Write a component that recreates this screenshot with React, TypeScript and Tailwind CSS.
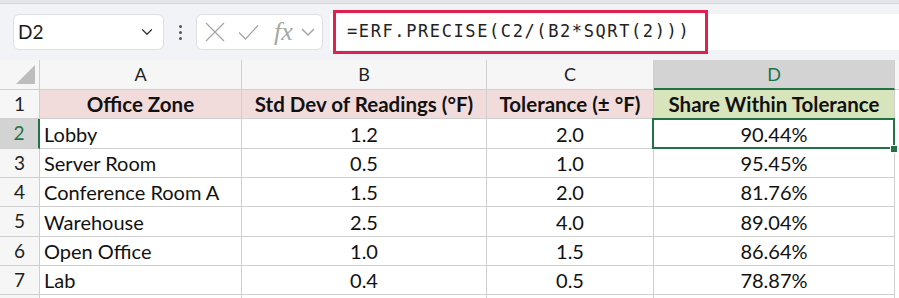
import { ChevronDown } from 'lucide-react';

const COLS = [
  { key: 'A', width: 'w-[202px]' },
  { key: 'B', width: 'w-[245px]' },
  { key: 'C', width: 'w-[167px]' },
  { key: 'D', width: 'w-[241px]' },
];

const HEADERS = ['Office Zone', 'Std Dev of Readings (°F)', 'Tolerance (± °F)', 'Share Within Tolerance'];

const ROWS = [
  ['Lobby', '1.2', '2.0', '90.44%'],
  ['Server Room', '0.5', '1.0', '95.45%'],
  ['Conference Room A', '1.5', '2.0', '81.76%'],
  ['Warehouse', '2.5', '4.0', '89.04%'],
  ['Open Office', '1.0', '1.5', '86.64%'],
  ['Lab', '0.4', '0.5', '78.87%'],
];

// heights of rows 1..7, so the grid lines land where the screenshot has them
const HEIGHTS = ['h-[29px]', 'h-[30px]', 'h-[29px]', 'h-[29px]', 'h-[30px]', 'h-[29px]', 'h-[29px]'];

function FormulaBar() {
  return (
    <div className="flex h-[56px] items-center bg-[#f1f3f6] pl-[13px]">
      {/* Name box */}
      <div className="flex h-[36px] w-[151px] items-center justify-between rounded-[6px] border border-[#dcdfe3] bg-white pr-[7px] pl-[4px]">
        <span className="text-[19px] text-[#1b1b1b]">D2</span>
        <ChevronDown size={18} strokeWidth={1.6} className="text-[#333]" />
      </div>

      {/* Splitter dots */}
      <div className="flex w-[32px] flex-col items-center gap-[3px]">
        <span className="h-[3px] w-[3px] rounded-full bg-[#555]" />
        <span className="h-[3px] w-[3px] rounded-full bg-[#555]" />
        <span className="h-[3px] w-[3px] rounded-full bg-[#555]" />
      </div>

      {/* Cancel / enter / fx */}
      <div className="flex h-[36px] w-[127px] items-center rounded-[6px] border border-[#dcdfe3] bg-white pl-[8px] text-[#a6a6a6]">
        <svg width="20" height="20" viewBox="0 0 20 20" fill="none" stroke="currentColor" strokeWidth="1.3">
          <path d="M1 1 19 19M19 1 1 19" />
        </svg>
        <svg width="21" height="17" viewBox="0 0 21 17" fill="none" stroke="currentColor" strokeWidth="1.3" className="ml-[13px]">
          <path d="M1 8.5 7.5 15 20 1.5" />
        </svg>
        <span className="ml-[15px] font-['Liberation_Serif',serif] text-[26px] italic leading-none">fx</span>
        <svg width="14" height="8" viewBox="0 0 14 8" fill="none" stroke="currentColor" strokeWidth="1.5" className="ml-[8px]">
          <path d="M1 1 7 7 13 1" />
        </svg>
      </div>

      {/* Formula input */}
      <div className="ml-[7px] flex h-[36px] flex-1 items-center bg-white">
        <div className="ml-[3px] flex h-[44px] w-[375px] items-center border-[3px] border-[#e1204f] pl-[11px]">
          <span className="font-['DejaVu_Sans_Mono',monospace] text-[17px] tracking-[1.6px] text-[#222]">
            =ERF.PRECISE(C2/(B2*SQRT(2)))
          </span>
        </div>
      </div>
    </div>
  );
}

function ColumnHeaders() {
  return (
    <div className="flex h-[30px] bg-[#f6f6f6]">
      <div className="flex w-[40px] shrink-0 items-end border-r border-b border-[#cfcfcf] pb-[5px] pl-[16px]">
        <svg width="19" height="19" viewBox="0 0 19 19">
          <polygon points="19,0 19,19 0,19" fill="#bdbdbd" />
        </svg>
      </div>
      {COLS.map((c) =>
        c.key === 'D' ? (
          <div
            key={c.key}
            className={`${c.width} flex shrink-0 items-center justify-center border-r border-b-2 border-r-[#cfcfcf] border-b-[#217346] bg-[#d3d3d3] text-[18px] text-[#217346]`}
          >
            {c.key}
          </div>
        ) : (
          <div
            key={c.key}
            className={`${c.width} flex shrink-0 items-center justify-center border-r border-b border-[#cfcfcf] text-[18px] text-[#1f1f1f]`}
          >
            {c.key}
          </div>
        ),
      )}
      <div className="flex-1 border-b border-[#cfcfcf]" />
    </div>
  );
}

function Row({ n, cells }: { n: number; cells: string[] }) {
  const header = n === 1;
  const active = n === 2;
  return (
    <div className={`flex ${HEIGHTS[n - 1]}`}>
      <div
        className={
          active
            ? 'flex w-[40px] shrink-0 items-center justify-center border-r-2 border-b border-r-[#217346] border-b-[#cfcfcf] bg-[#d3d3d3] text-[19px] text-[#217346]'
            : 'flex w-[40px] shrink-0 items-center justify-center border-r border-b border-[#cfcfcf] bg-[#f6f6f6] text-[19px] text-[#1f1f1f]'
        }
      >
        {n}
      </div>
      {cells.map((v, i) => {
        const bg = header ? (i === 3 ? 'bg-[#d8e4bc]' : 'bg-[#f2dcdb]') : 'bg-white';
        const align = i === 0 && !header ? 'justify-start pl-[4px]' : 'justify-center';
        return (
          <div
            key={i}
            className={`${COLS[i].width} relative flex shrink-0 items-center border-r border-b border-[#cfcfcf] ${bg} ${align} ${header ? 'text-[20.5px] font-bold' : 'text-[20px]'} text-[#111]`}
          >
            {v}
            {active && i === 3 && (
              <>
                <div className="pointer-events-none absolute -top-px -right-[1px] -bottom-px -left-[2px] z-10 border-2 border-[#217346]" />
                <div className="absolute -right-[4px] -bottom-[5px] z-20 h-[8px] w-[8px] border border-white bg-[#217346]" />
              </>
            )}
          </div>
        );
      })}
      <div className="flex-1 bg-white" />
    </div>
  );
}

export default function App() {
  return (
    <div className="h-[298px] w-[899px] overflow-hidden bg-white font-['Lato',sans-serif]">
      <div className="h-[4px] border-b border-[#d4d6d9] bg-[#e3e5e8]" />
      <FormulaBar />
      <ColumnHeaders />
      <Row n={1} cells={HEADERS} />
      {ROWS.map((r, i) => (
        <Row key={i} n={i + 2} cells={r} />
      ))}
      <div className="flex h-[10px]">
        <div className="w-[40px] border-r border-[#cfcfcf] bg-[#f6f6f6]" />
        <div className="w-[202px] border-r border-[#cfcfcf]" />
        <div className="w-[245px] border-r border-[#cfcfcf]" />
        <div className="w-[167px] border-r border-[#cfcfcf]" />
        <div className="w-[241px] border-r border-[#cfcfcf]" />
      </div>
    </div>
  );
}
